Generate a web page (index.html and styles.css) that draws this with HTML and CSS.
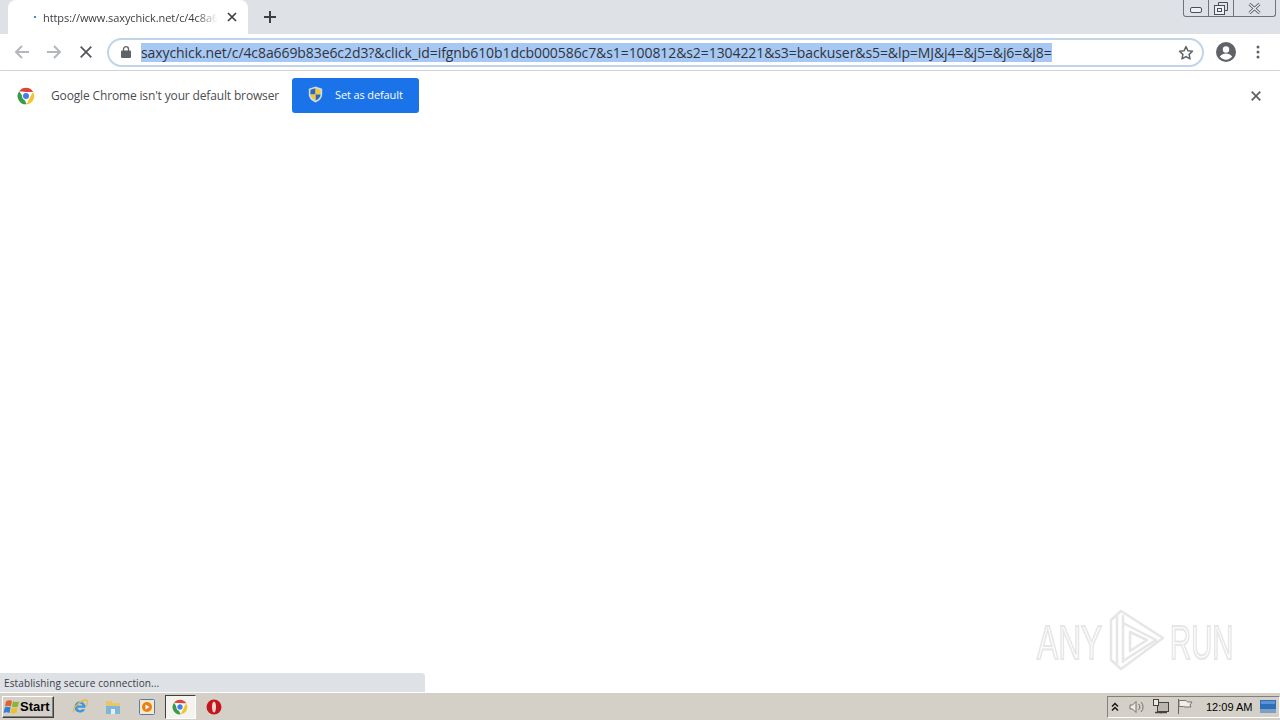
FILE: index.html
```html
<!DOCTYPE html>
<html lang="en">
<head>
<meta charset="utf-8">
<title>Chrome</title>
<link rel="stylesheet" href="styles.css">
</head>
<body>
<div class="screen">
  <header class="tabstrip">
    <div class="tab">
      <span class="tab-dot"></span>
      <span class="tab-title">https://www.saxychick.net/c/4c8a669b83e6c2d3</span>
      <svg class="tab-close" width="10" height="10" viewBox="0 0 10 10"><path d="M1 1l8 8M9 1l-8 8" stroke="#3c4043" stroke-width="1.7"/></svg>
    </div>
    <svg class="newtab" width="12" height="12" viewBox="0 0 12 12"><path d="M6 0v12M0 6h12" stroke="#3c4043" stroke-width="2"/></svg>
    <div class="winctl">
      <span class="winbtn min"><svg width="12" height="6" viewBox="0 0 12 6"><rect x=".5" y=".5" width="11" height="5" rx="1.500" fill="#eef0f3" stroke="#4a4f57"/></svg></span>
      <span class="winbtn max"><svg width="14" height="13" viewBox="0 0 14 13"><path d="M4.500 3V.5h9v8H11" fill="none" stroke="#4a4f57"/><rect x=".5" y="3.500" width="10" height="9" fill="#eef0f3" stroke="#4a4f57"/><rect x="3.500" y="6.500" width="4" height="3" fill="none" stroke="#4a4f57"/></svg></span>
      <span class="winbtn close"><svg width="13" height="11" viewBox="0 0 13 11"><path d="M1.500 1l10 9M11.500 1l-10 9" stroke="#4a4f57" stroke-width="3"/><path d="M1.500 1l10 9M11.500 1l-10 9" stroke="#eef0f3" stroke-width="1.400"/></svg></span>
    </div>
  </header>

  <nav class="toolbar">
    <svg class="nav-back" width="16" height="14" viewBox="0 0 16 14"><path d="M15 7H2M8 1L2 7l6 6" fill="none" stroke="#b4b7bb" stroke-width="2"/></svg>
    <svg class="nav-fwd" width="16" height="14" viewBox="0 0 16 14"><path d="M1 7h13M8 1l6 6-6 6" fill="none" stroke="#b4b7bb" stroke-width="2"/></svg>
    <svg class="nav-stop" width="12" height="12" viewBox="0 0 12 12"><path d="M.7.7l10.600 10.600M11.300.7L.7 11.300" stroke="#55585c" stroke-width="1.800"/></svg>
    <div class="omnibox">
      <svg class="lock" width="10" height="12" viewBox="0 0 10 12"><path d="M2.500 5V3.200a2.500 2.500 0 015 0V5" fill="none" stroke="#5f6368" stroke-width="1.300"/><rect y="4.500" width="10" height="7.500" rx="1" fill="#5f6368"/></svg>
      <span class="url">saxychick.net/c/4c8a669b83e6c2d3?&amp;click_id=ifgnb610b1dcb000586c7&amp;s1=100812&amp;s2=1304221&amp;s3=backuser&amp;s5=&amp;lp=MJ&amp;j4=&amp;j5=&amp;j6=&amp;j8=</span>
      <svg class="star" width="16" height="15" viewBox="0 0 16 15"><path d="M8 1.600l1.900 4.200 4.600.5-3.400 3.100.9 4.500L8 11.600l-4 2.300.9-4.500L1.500 6.300l4.600-.5z" fill="none" stroke="#5f6368" stroke-width="1.500" stroke-linejoin="round"/></svg>
    </div>
    <svg class="avatar" width="20" height="20" viewBox="0 0 20 20"><circle cx="10" cy="10" r="10" fill="#5f6368"/><circle cx="10" cy="7.500" r="3.200" fill="#fff"/><path d="M3.800 14.600c1.500-2.300 3.900-3.200 6.200-3.200s4.700.9 6.200 3.200c-1.500 2-3.700 3.100-6.200 3.100s-4.700-1.100-6.200-3.100z" fill="#fff"/></svg>
    <svg class="menu" width="4" height="14" viewBox="0 0 4 14"><circle cx="2" cy="2" r="1.500" fill="#5f6368"/><circle cx="2" cy="7" r="1.500" fill="#5f6368"/><circle cx="2" cy="12" r="1.500" fill="#5f6368"/></svg>
  </nav>

  <section class="infobar">
    <svg class="chrome-logo" width="18" height="18" viewBox="0 0 48 48">
      <path d="M24 2a22 22 0 0119 11H24L6 11A22 22 0 0124 2z" fill="#d9463a"/>
      <path d="M43 13a22 22 0 01-17 33l9-20z" fill="#f4c430"/>
      <path d="M26 46A22 22 0 016 11l12 19z" fill="#3a9b4d"/>
      <circle cx="24" cy="24" r="11" fill="#fff"/>
      <circle cx="24" cy="24" r="8" fill="#3f7fe8"/>
    </svg>
    <span class="infotext">Google Chrome isn't your default browser</span>
    <button class="default-btn">
      <svg width="15" height="17" viewBox="0 0 14 16"><path d="M7 .5l6.300 2v5c0 3.800-2.600 6.500-6.300 8C3.300 14 .7 11.300.7 7.500v-5z" fill="#cfdcf0"/><path d="M7 2v6H2.200V3.600z" fill="#2f66b8"/><path d="M7 2l4.800 1.600V8H7z" fill="#f5c832"/><path d="M7 8h4.800c-.3 2.700-2.200 4.500-4.800 5.800z" fill="#2f66b8"/><path d="M7 8v5.800C4.400 12.500 2.500 10.700 2.200 8z" fill="#f5c832"/></svg>
      <span>Set as default</span>
    </button>
    <svg class="info-close" width="10" height="10" viewBox="0 0 10 10"><path d="M.7.7l8.600 8.600M9.300.7L.7 9.300" stroke="#5f6368" stroke-width="1.800"/></svg>
  </section>

  <main class="page">
    <div class="watermark" aria-hidden="true">
      <span class="wm-box"><span class="wm-text wm-any">ANY</span></span>
      <svg class="wm-logo" width="56" height="64" viewBox="0 0 56 64"><g fill="none" stroke="#e6e6e6" stroke-width="2.500" stroke-linejoin="round"><path d="M2 12L12 3l42 27L12 61 2 52z"/><path d="M8 8v48"/><path d="M14 7v48"/><path d="M14 15l33 17-33 21"/><path d="M21 24l17 8-17 11z"/></g></svg>
      <span class="wm-box"><span class="wm-text">RUN</span></span>
    </div>
    <div class="status">Establishing secure connection...</div>
  </main>

  <footer class="taskbar">
    <button class="start">
      <svg width="17" height="16" viewBox="0 0 17 16"><path d="M3 2.500C5 1 7 1 9 2L7.800 7.500C6 6.500 4 6.500 2 7.500z" fill="#e2602a"/><path d="M10 2.200c2 1 4 1 6 .3l-1.200 5.300c-2 .6-4 .6-6-.2z" fill="#86b53a"/><path d="M1.800 8.500c2-1 4-1 5.800 0L6.500 14C4.500 13 2.500 13 .5 14z" fill="#2f80d8"/><path d="M8.600 8.700c2 .7 4 .7 6 .1L13.500 14c-2 .6-4 .6-6-.2z" fill="#f2bf2c"/></svg>
      <span>Start</span>
    </button>
    <div class="quicklaunch">
      <span class="task"><svg width="18" height="18" viewBox="0 0 18 18"><path d="M9 3.500a5.500 5.500 0 105 7.800h-3a2.700 2.700 0 01-4.600-1.500H14.500A5.500 5.500 0 009 3.500zM6.500 7.500A2.700 2.700 0 0111.600 7.500z" fill="#3d97dc" fill-rule="evenodd"/><path d="M3 14C0 11 10 2 15 2c2 0 2 3 0 6" fill="none" stroke="#e9b949" stroke-width="1.300"/></svg></span>
      <span class="task"><svg width="18" height="18" viewBox="0 0 18 18"><path d="M2 3h6l1 2h7v10H2z" fill="#e9c46a"/><rect x="2" y="8" width="14" height="8" fill="#7fb6d4"/><rect x="7" y="11" width="4" height="5" fill="#e4eef4"/></svg></span>
      <span class="task"><svg width="18" height="18" viewBox="0 0 18 18"><rect x="1.500" y="1.500" width="15" height="15" rx="1" fill="#f7e8c8" stroke="#4c7fb0"/><circle cx="9" cy="9" r="5" fill="#e87e1c"/><path d="M7.500 6.500l4 2.500-4 2.500z" fill="#fff"/></svg></span>
      <span class="task active"><svg width="16" height="16" viewBox="0 0 48 48"><path d="M24 2a22 22 0 0119 11H24L6 11A22 22 0 0124 2z" fill="#d9463a"/><path d="M43 13a22 22 0 01-17 33l9-20z" fill="#f4c430"/><path d="M26 46A22 22 0 016 11l12 19z" fill="#3a9b4d"/><circle cx="24" cy="24" r="11" fill="#fff"/><circle cx="24" cy="24" r="8" fill="#3f7fe8"/></svg></span>
      <span class="task"><svg width="16" height="16" viewBox="0 0 16 16"><circle cx="8" cy="8" r="7.500" fill="#c5151b"/><ellipse cx="8" cy="8" rx="2" ry="5.500" fill="#f3d6d0"/></svg></span>
    </div>
    <div class="tray">
      <svg width="8" height="10" viewBox="0 0 8 10"><path d="M1 4.500l3-3 3 3M1 8.500l3-3 3 3" fill="none" stroke="#111" stroke-width="1.400"/></svg>
      <svg class="t-vol" width="16" height="14" viewBox="0 0 16 14"><path d="M1 5h2.500L7 1.500v11L3.500 9H1z" fill="#eceae4" stroke="#77756f"/><path d="M9.500 4a4 4 0 010 6M12 2a7 7 0 010 10" fill="none" stroke="#77756f"/></svg>
      <svg class="t-net" width="17" height="16" viewBox="0 0 17 16"><rect x="5.500" y="3.500" width="11" height="9" fill="#b9b7b0" stroke="#45433e"/><rect x="1.500" y=".5" width="5" height="6" fill="#eceae4" stroke="#45433e"/><path d="M3 13.500h12M9 12.500v2" stroke="#45433e" stroke-width="1.500"/></svg>
      <svg class="t-flag" width="16" height="15" viewBox="0 0 16 15"><path d="M1.500 0v15" stroke="#66645f"/><path d="M2 1.500h7l1.500 1.500h4.500l-2 3 1 2H8L6.500 7.500H2z" fill="#f0eee8" stroke="#77756f"/></svg>
      <span class="clock">12:09 AM</span>
      <svg class="t-desk" width="16" height="13" viewBox="0 0 16 13"><rect width="16" height="13" fill="#2f6fb5"/><rect y="9" width="16" height="4" fill="#7f9ec4"/><rect x="1" y="1" width="14" height="3" fill="#5a94d4"/></svg>
    </div>
  </footer>
</div>
</body>
</html>
```
FILE: styles.css
```css
* { box-sizing: border-box; }
html, body { margin: 0; height: 100%; overflow: hidden; background: #fff; }
body { font-family: "Open Sans", "Noto Sans", "Liberation Sans", sans-serif; color: #3c4043; }
svg { display: block; flex: none; }

.screen { width: 1280px; height: 720px; display: flex; flex-direction: column; }

.tabstrip { height: 34px; background: #dee1e6; display: flex; align-items: flex-end; padding-left: 8px; position: relative; }
.tab { width: 240px; height: 34px; background: #fff; border-radius: 8px 8px 0 0; display: flex; align-items: center; padding: 0 11px 0 26px; }
.tab-dot { width: 2px; height: 2px; background: #4285f4; flex: none; margin-right: 7px; }
.tab-title { font-size: 11px; letter-spacing: -0.08px; width: 175px; white-space: nowrap; overflow: hidden; color: #3c4043;
  -webkit-mask-image: linear-gradient(to right, #000 88%, transparent 100%); mask-image: linear-gradient(to right, #000 88%, transparent 100%); }
.tab-close { margin-left: auto; }
.newtab { margin: 0 0 11px 16px; }
.winctl { position: absolute; top: 0; right: 4px; width: 93px; height: 17px; display: flex; border: 1px solid #6f747c; border-top: 0; border-radius: 0 0 3px 3px; background: #dee1e6; }
.winbtn { display: flex; align-items: center; justify-content: center; border-right: 1px solid #6f747c; }
.winbtn.min { width: 25px; padding-top: 3px; }
.winbtn.max { width: 25px; }
.winbtn.close { flex: 1; border-right: 0; }

.toolbar { height: 37px; background: #fff; border-bottom: 1px solid #dadce0; display: flex; align-items: center; padding: 0 19px 0 14px; }
.nav-fwd { margin-left: 16px; }
.nav-stop { margin-left: 18px; }
.omnibox { width: 1097px; height: 29px; margin-left: 15px; border: 2px solid #c0d4ea; border-radius: 15px; display: flex; align-items: center; padding: 0 8px 0 12px; }
.lock { margin-right: 10px; }
.url { font-size: 14px; letter-spacing: -0.084px; background: #a8c8f4; color: #2f343b; line-height: 19px; white-space: nowrap; }
.star { margin-left: auto; }
.avatar { margin-left: 12px; }
.menu { margin-left: 20px; }

.infobar { height: 49px; background: #fff; display: flex; align-items: center; padding: 0 19px 0 17px; box-shadow: 0 1px 2px rgba(0,0,0,.55); position: relative; }
.infotext { font-size: 12px; letter-spacing: -0.15px; margin-left: 16px; color: #4a4d51; white-space: nowrap; }
.default-btn { margin-left: 13px; width: 127px; height: 35px; background: #1a73e8; border: 0; border-radius: 3px; color: #fff; font: inherit; font-size: 11px; letter-spacing: -0.12px; display: flex; align-items: center; gap: 12px; padding: 0 0 2px 16px; }
.info-close { margin-left: auto; }

.page { flex: 1; background: #fff; position: relative; display: flex; flex-direction: column; justify-content: flex-end; }
.status { width: 425px; height: 19px; background: #dee1e6; border-radius: 0 4px 0 0; font-size: 10px; letter-spacing: 0.12px; line-height: 20px; padding-left: 4px; color: #3c4043; }
.watermark { position: absolute; left: 1037px; top: 488px; display: flex; align-items: center; gap: 7px; }
.wm-box { width: 65px; display: block; height: 40px; margin-top: 6px; }
.wm-text { display: inline-block; font-family: "Liberation Sans", sans-serif; font-size: 48px; line-height: 40px; color: #fbfbfb; -webkit-text-stroke: 2px #e6e6e6; transform: scaleX(.61); transform-origin: left center; white-space: nowrap; }
.wm-any { transform: scaleX(.66); }
.wm-logo { margin: 0 -2px 0 0; }

.taskbar { height: 28px; background: #d4d0c8; border-top: 1px solid #fff; display: flex; align-items: center; padding: 0 0 0 2px; font-family: "Liberation Sans", sans-serif; }
.start { width: 52px; height: 22px; background: #d4d0c8; border: 1px solid; border-color: #fff #404040 #404040 #fff; box-shadow: inset -1px -1px 0 #808080; display: flex; align-items: center; gap: 0; padding: 0; font: bold 13px "Liberation Sans", sans-serif; color: #000; }
.quicklaunch { display: flex; align-items: center; margin-left: 9px; }
.task { width: 33.6px; height: 24px; display: flex; align-items: center; justify-content: center; }
.task.active { width: 31px; margin: 0 1px; background: #f4f3f0; border: 1px solid; border-color: #404040 #fff #fff #404040; }
.tray { margin-left: auto; width: 173px; height: 22px; border: 1px solid; border-color: #808080 #fff #fff #808080; display: flex; align-items: center; padding-left: 3px; }
.t-vol { margin-left: 10px; }
.t-net { margin-left: 7px; }
.t-flag { margin-left: 8px; }
.clock { font-size: 11px; margin-left: 13px; color: #000; white-space: nowrap; }
.t-desk { margin-left: 8px; }
```
